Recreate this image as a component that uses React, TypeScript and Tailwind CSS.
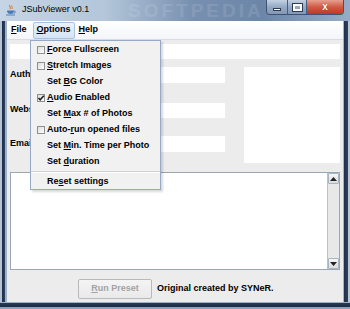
import type { ReactNode } from "react";

// mnemonic letter, underlined like Swing does it
function U({ children }: { children: ReactNode }) {
    return <span className="underline underline-offset-[1px] decoration-[1px]">{children}</span>;
}

function Check({ checked }: { checked?: boolean }) {
    return (
        <div className="relative w-[8px] h-[8px] border border-[#8e8f8f] bg-[linear-gradient(135deg,#dcdcdc,#ffffff)]">
            {checked && (
                <svg viewBox="0 0 8 8" className="absolute -left-[1px] -top-[1px] w-[8px] h-[8px]">
                    <path d="M1.5 4 L3.2 5.8 L6.8 1.8" fill="none" stroke="#222" strokeWidth="1.6" />
                </svg>
            )}
        </div>
    );
}

function MenuItem({ label, box, checked }: { label: ReactNode; box?: boolean; checked?: boolean }) {
    return (
        <div className="flex items-center h-[16px]">
            <div className="w-[15px] flex justify-center pl-[4px]">{box && <Check checked={checked} />}</div>
            <span className="pl-[1px]">{label}</span>
        </div>
    );
}

function JavaIcon() {
    return (
        <svg viewBox="0 0 12 12" className="w-[12px] h-[12px]">
            <path d="M5 1 C3.5 2.5 6.5 3 5 5" fill="none" stroke="#e0762a" strokeWidth="1.1" />
            <path d="M7 1.5 C6 2.8 8 3.2 7 5" fill="none" stroke="#e0762a" strokeWidth="1" />
            <path d="M2 6.5 H9 C9 9 7.5 10 5.5 10 C3.5 10 2 9 2 6.5 Z" fill="#4a79b8" />
            <path d="M9 7 C11 7 11 9 8.5 9.3" fill="none" stroke="#4a79b8" strokeWidth="0.9" />
            <path d="M1 11 H10" stroke="#4a79b8" strokeWidth="0.9" />
        </svg>
    );
}

function ArrowBtn({ up }: { up?: boolean }) {
    return (
        <div className="h-[11px] border border-[#a7b4c4] rounded-[1px] bg-[linear-gradient(#f6f6f6,#dcdcdc)] flex items-center justify-center">
            <svg viewBox="0 0 7 4" className="w-[7px] h-[4px]">
                <path d={up ? "M0 4 L3.5 0 L7 4 Z" : "M0 0 L3.5 4 L7 0 Z"} fill="#222" />
            </svg>
        </div>
    );
}

export default function App() {
    const font = "font-['Liberation_Sans',Arial,sans-serif]";

    return (
        <div className={`relative w-[350px] h-[309px] flex flex-col overflow-hidden select-none ${font} text-[9px] text-black bg-[#7f97b5]`}>
            {/* title bar */}
            <div className="relative h-[21px] flex items-start overflow-hidden bg-[linear-gradient(to_right,#c6d5e5_0%,#b3c6da_30%,#7890b0_55%,#6c86a8_75%,#96adc7_100%)]">
                <div className="absolute left-[128px] top-[1px] text-[19px] font-bold tracking-[3px] text-white/10 leading-none">SOFTPEDIA</div>
                <div className="flex items-center h-[20px] pl-[5px] gap-[5px]">
                    <JavaIcon />
                    <span className="text-[9px] text-black">JSubViewer v0.1</span>
                </div>
                <div className="relative ml-auto mr-[6px] flex h-[15px] border border-t-0 border-[#3f5270] rounded-b-[4px] overflow-hidden">
                    <div className="w-[21px] flex items-center justify-center bg-[linear-gradient(#c4d2e2,#94a9c3_50%,#8198b6)] border-r border-[#4a5d7a]">
                        <div className="w-[8px] h-[3px] bg-white border border-[#2e3b52] mt-[4px]" />
                    </div>
                    <div className="w-[19px] flex items-center justify-center bg-[linear-gradient(#c4d2e2,#94a9c3_50%,#8198b6)] border-r border-[#4a5d7a]">
                        <div className="w-[9px] h-[7px] border-[2px] border-white outline outline-1 outline-[#2e3b52]" />
                    </div>
                    <div className="w-[36px] flex items-center justify-center bg-[linear-gradient(#e7a090,#d05a45_50%,#bb3a27)]">
                        <span className="text-white font-bold text-[10px] leading-none [text-shadow:0_0_1px_#4a1a12]">x</span>
                    </div>
                </div>
            </div>

            <div className="flex flex-1">
                {/* left frame */}
                <div className="w-[7px] bg-[linear-gradient(to_right,#b4c2d3_0,#b4c2d3_2px,#1f2f4a_2px,#2c3f5e_5px,#9fb1c7_5px)]" />

                {/* client area */}
                <div className="w-[336px] flex flex-col bg-[#ececec]">
                    {/* menu bar */}
                    <div className="h-[19px] flex items-center bg-[linear-gradient(#ffffff,#f3f5f8)] border-b border-[#d8dde4] font-bold">
                        <div className="px-[4px]"><U>F</U>ile</div>
                        <div className="ml-[2px] h-[17px] px-[3px] flex items-center border border-[#a9c3de] rounded-[2px] bg-[linear-gradient(#eaf2fb,#d4e4f4)]">
                            <U>O</U>ptions
                        </div>
                        <div className="ml-[4px]"><U>H</U>elp</div>
                    </div>

                    <div className="flex flex-col px-[3px]">
                        <div className="mt-[4px] h-[15px] bg-white" />

                        <div className="mt-[8px] flex h-[96px]">
                            <div className="w-[215px] flex flex-col font-bold">
                                <div className="flex items-center h-[16px]">
                                    <span className="w-[46px]">Author:</span>
                                    <div className="flex-1 h-[16px] bg-white" />
                                </div>
                                <div className="flex items-center h-[16px] mt-[19px]">
                                    <span className="w-[46px]">Website:</span>
                                    <div className="flex-1 h-[15px] bg-white" />
                                </div>
                                <div className="flex items-center h-[16px] mt-[18px]">
                                    <span className="w-[46px]">Email:</span>
                                    <div className="flex-1 h-[16px] bg-white" />
                                </div>
                            </div>
                            <div className="ml-[19px] w-[96px] bg-white" />
                        </div>

                        {/* text area */}
                        <div className="mt-[9px] h-[98px] flex border border-[#9aa6b5] bg-white">
                            <div className="flex-1" />
                            <div className="w-[12px] flex flex-col border-l border-[#b5c2d3] bg-[#e8e8e8]">
                                <ArrowBtn up />
                                <div className="flex-1" />
                                <ArrowBtn />
                            </div>
                        </div>

                        {/* bottom row */}
                        <div className="mt-[9px] flex items-center h-[20px]">
                            <div className="ml-[68px] w-[74px] h-[20px] flex items-center justify-center border border-[#b9b9b9] rounded-[2px] bg-[linear-gradient(#f4f4f4,#e9e9e9)] text-[#a3a3a3] font-bold">
                                <U>R</U>un Preset
                            </div>
                            <span className="ml-[5px] font-bold">Original created by SYNeR.</span>
                        </div>
                    </div>
                </div>

                {/* right frame */}
                <div className="w-[7px] bg-[linear-gradient(to_right,#a3b5ca_0,#a3b5ca_1px,#20304b_1px,#2d4060_5px,#b7c4d4_5px)]" />
            </div>

            {/* bottom frame */}
            <div className="h-[7px] bg-[linear-gradient(#9fb1c7_0,#9fb1c7_1px,#263956_1px,#1d2c45_5px,#8ea2bb_5px)]" />

            {/* Options popup menu */}
            <div className="absolute left-[30px] top-[40px] w-[131px] h-[150px] pt-[1px] border border-[#97a9c6] bg-[#f1f1f1] font-bold shadow-[2px_2px_2px_rgba(0,0,0,0.15)]">
                <MenuItem box label={<><U>F</U>orce Fullscreen</>} />
                <MenuItem box label={<><U>S</U>tretch Images</>} />
                <MenuItem label={<>Set <U>B</U>G Color</>} />
                <MenuItem box checked label={<><U>A</U>udio Enabled</>} />
                <MenuItem label={<>Set <U>M</U>ax # of Photos</>} />
                <MenuItem box label={<>Auto-<U>r</U>un opened files</>} />
                <MenuItem label={<>Set <U>M</U>in. Time per Photo</>} />
                <MenuItem label={<>Set <U>d</U>uration</>} />
                <div className="h-[4px] flex flex-col justify-center">
                    <div className="h-[1px] bg-[#d2d2d2]" />
                    <div className="h-[1px] bg-white" />
                </div>
                <MenuItem label={<>Re<U>s</U>et settings</>} />
            </div>
        </div>
    );
}
